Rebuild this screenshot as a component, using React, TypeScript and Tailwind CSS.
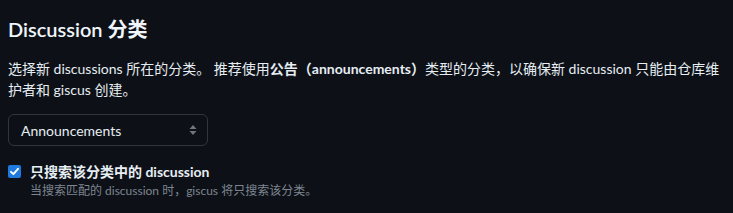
import React from "react";

export default function App() {
  const font = {
    fontFamily: 'Lato, "Noto Sans CJK SC", sans-serif',
  } as React.CSSProperties;
  return (
    <div
      className="w-[733px] h-[213px] bg-[#0d1117] text-[#e6edf3] px-2 pt-[17px] overflow-hidden"
      style={font}
    >
      <h2 className="text-[20px] leading-[25px] font-semibold text-[#f0f6fc]">
        Discussion 分类
      </h2>
      <p className="mt-[16px] text-[14px] leading-[21px] text-[#e6edf3] w-[720px]">
        选择新 discussions 所在的分类。 推荐使用
        <span className="font-bold">公告（announcements）</span>
        类型的分类，以确保新 discussion 只能由仓库维
        <br />
        护者和 giscus 创建。
      </p>
      <div className="mt-[14px] w-[200px] h-[32px] rounded-[6px] border border-[#30363d] bg-[#0d1117] flex items-center justify-between pl-[12px] pr-[8px]">
        <span className="text-[14px] text-[#e6edf3]">Announcements</span>
        <svg width="10" height="14" viewBox="0 0 10 14" className="mr-[1px]">
          <path d="M5 2 L8.5 6 H1.5 Z" fill="#6e7681" />
          <path d="M5 12 L8.5 8 H1.5 Z" fill="#6e7681" />
        </svg>
      </div>
      <div className="mt-[15px] flex items-start gap-[6px]">
        <div className="mt-[4px] w-[13px] h-[13px] rounded-[2px] bg-[#1f7ae0] flex items-center justify-center shrink-0">
          <svg width="11" height="11" viewBox="0 0 11 11">
            <path
              d="M2 5.8 L4.4 8.2 L9 2.8"
              stroke="white"
              strokeWidth="1.9"
              fill="none"
              strokeLinecap="round"
              strokeLinejoin="round"
            />
          </svg>
        </div>
        <div className="ml-[3px]">
          <div className="text-[14px] leading-[21px] font-bold text-[#e6edf3]">
            只搜索该分类中的 discussion
          </div>
          <div className="text-[12px] leading-[18px] text-[#7d8590]">
            当搜索匹配的 discussion 时，giscus 将只搜索该分类。
          </div>
        </div>
      </div>
    </div>
  );
}
